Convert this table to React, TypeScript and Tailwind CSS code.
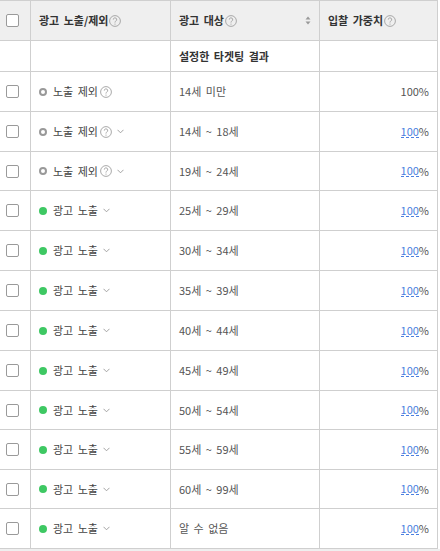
import { Fragment } from 'react';

type Row = { excluded: boolean; help?: boolean; chevron?: boolean; age: string; link: boolean; h: 'a' | 'b' };

const ROWS: Row[] = [
  { excluded: true, help: true, chevron: false, age: '14세 미만', link: false, h: 'a' },
  { excluded: true, help: true, chevron: true, age: '14세 ~ 18세', link: true, h: 'a' },
  { excluded: true, help: true, chevron: true, age: '19세 ~ 24세', link: true, h: 'b' },
  { excluded: false, chevron: true, age: '25세 ~ 29세', link: true, h: 'a' },
  { excluded: false, chevron: true, age: '30세 ~ 34세', link: true, h: 'a' },
  { excluded: false, chevron: true, age: '35세 ~ 39세', link: true, h: 'a' },
  { excluded: false, chevron: true, age: '40세 ~ 44세', link: true, h: 'a' },
  { excluded: false, chevron: true, age: '45세 ~ 49세', link: true, h: 'a' },
  { excluded: false, chevron: true, age: '50세 ~ 54세', link: true, h: 'b' },
  { excluded: false, chevron: true, age: '55세 ~ 59세', link: true, h: 'a' },
  { excluded: false, chevron: true, age: '60세 ~ 99세', link: true, h: 'b' },
  { excluded: false, chevron: true, age: '알 수 없음', link: true, h: 'a' },
];

const FONT = "font-['Noto_Sans_CJK_KR','Noto_Sans',sans-serif]";

function Help() {
  return (
    <svg width="12" height="12" viewBox="0 0 12 12" className="shrink-0">
      <circle cx="6" cy="6" r="5.4" fill="none" stroke="#a0a0a0" strokeWidth="0.9" />
      <path d="M4.3 4.6a1.7 1.7 0 1 1 2.4 1.5c-.5.3-.7.6-.7 1.1v.4" fill="none" stroke="#a0a0a0" strokeWidth="0.9" />
      <circle cx="6" cy="9.1" r="0.55" fill="#a0a0a0" />
    </svg>
  );
}

function Chevron() {
  return (
    <svg width="7" height="5" viewBox="0 0 7 5" className="shrink-0">
      <path d="M0.5 0.8L3.5 3.8L6.5 0.8" fill="none" stroke="#999" strokeWidth="0.9" />
    </svg>
  );
}

function Checkbox() {
  return <span className="block w-[13px] h-[13px] border border-[#9a9a9a] rounded-[2px] bg-white" />;
}

export default function App() {
  const cell = 'border-r border-b border-[#cfcfcf] flex items-center';

  return (
    <div className={`bg-white min-h-screen ${FONT} text-[11px] text-[#555] [word-spacing:2px]`}>
      <div className="w-[438px] grid grid-cols-[31px_140px_149px_118px] border-t border-[#cfcfcf]">
        {/* header */}
        <div className={`${cell} h-[40px] bg-[#efefef] pl-[6px]`}>
          <Checkbox />
        </div>
        <div className={`${cell} h-[40px] bg-[#efefef] pl-[8px] gap-[1px] font-bold text-[#333]`}>
          <span>광고 노출/제외</span>
          <Help />
        </div>
        <div className={`${cell} h-[40px] bg-[#efefef] pl-[8px] pr-[8px] gap-[1px] font-bold text-[#333]`}>
          <span>광고 대상</span>
          <Help />
          <svg width="6" height="9" viewBox="0 0 6 9" className="ml-auto">
            <path d="M3 0.5L5.5 3.5H0.5Z" fill="#999" />
            <path d="M3 8.5L5.5 5.5H0.5Z" fill="#999" />
          </svg>
        </div>
        <div className={`${cell} h-[40px] bg-[#efefef] pl-[8px] gap-[1px] font-bold text-[#333]`}>
          <span>입찰 가중치</span>
          <Help />
        </div>

        {/* sub header */}
        <div className={`${cell} h-[31px]`} />
        <div className={`${cell} h-[31px]`} />
        <div className={`${cell} h-[31px] pl-[8px] font-bold text-[#333]`}>설정한 타겟팅 결과</div>
        <div className={`${cell} h-[31px]`} />

        {ROWS.map((r, i) => {
          const h = r.h === 'a' ? 'h-[40px]' : 'h-[39px]';
          return (
            <Fragment key={i}>
              <div className={`${cell} ${h} pl-[6px]`}>
                <Checkbox />
              </div>
              <div className={`${cell} ${h} pl-[8px]`}>
                {r.excluded ? (
                  <span className="w-[8px] h-[8px] rounded-full border-2 border-[#999] shrink-0" />
                ) : (
                  <span className="w-[8px] h-[8px] rounded-full bg-[#3ec863] shrink-0" />
                )}
                <span className="ml-[6px] text-[#444]">{r.excluded ? '노출 제외' : '광고 노출'}</span>
                {r.help && (
                  <span className="ml-[2px] flex">
                    <Help />
                  </span>
                )}
                {r.chevron && (
                  <span className="ml-[5px] flex">
                    <Chevron />
                  </span>
                )}
              </div>
              <div className={`${cell} ${h} pl-[8px]`}>{r.age}</div>
              <div className={`${cell} ${h} justify-end pr-[8px]`}>
                {r.link ? (
                  <span className="text-[#4b7fe0] border-b border-dashed border-[#4b7fe0] leading-[11px]">100</span>
                ) : (
                  <span>100</span>
                )}
                <span>%</span>
              </div>
            </Fragment>
          );
        })}
      </div>
      <div className="h-[10px] bg-[#efefef]" />
    </div>
  );
}
